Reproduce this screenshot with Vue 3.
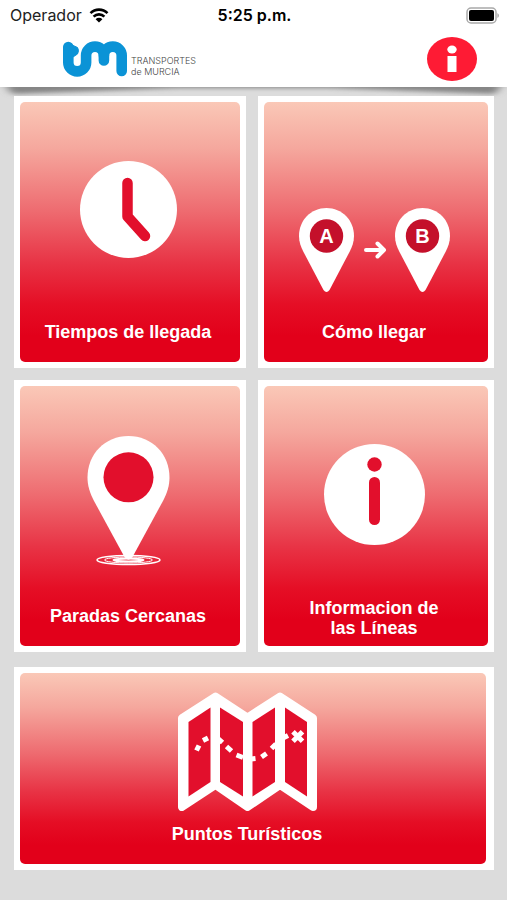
<template>
    <div class="home-page">
        <header class="top-header">
            <div class="status-bar">
                <div class="carrier">
                    <span>Operador</span>
                    <svg class="wifi-icon" viewBox="0 0 20 15">
                        <path d="M1.5 5.2a12 12 0 0 1 17 0" fill="none" stroke="#000" stroke-width="2.6" />
                        <path d="M4.6 8.6a7.6 7.6 0 0 1 10.8 0" fill="none" stroke="#000" stroke-width="2.6" />
                        <path d="M10 14.6L6.6 11.2a4.8 4.8 0 0 1 6.8 0z" />
                    </svg>
                </div>
                <strong class="clock">5:25 p.m.</strong>
                <svg class="battery-icon" viewBox="0 0 33 17">
                    <rect x="1" y="1" width="29" height="15" rx="4" fill="#fff" stroke="#a9a9a9" stroke-width="1.5" />
                    <rect x="3" y="3" width="25" height="11" rx="2" />
                    <path d="M31.4 6v5q1.6-1 1.6-2.5T31.4 6z" fill="#a9a9a9" />
                </svg>
            </div>

            <div class="brand-bar">
                <div class="brand">
                    <svg class="brand-mark" viewBox="0 0 66 36">
                        <g fill="none" stroke="#0b93d6" stroke-width="10.6" stroke-linecap="round">
                            <path d="M6.300 6V21.500a8.900 8.900 0 0 0 17.800 0V14.500a8.900 8.900 0 0 1 17.800 0V19.500" />
                            <path d="M41.900 14.500a8.900 8.900 0 0 1 17.800 0V30" />
                        </g>
                        <path d="M8 3L15.500 6.500q2 3 0 6.500L11 16H6z" fill="#0b93d6" stroke="#0b93d6"
                            stroke-linejoin="round" />
                    </svg>
                    <div class="brand-name">
                        <span>TRANSPORTES</span>
                        <span>de MURCIA</span>
                    </div>
                </div>
                <button class="info-btn" aria-label="Información">
                    <svg viewBox="0 0 50 44">
                        <ellipse cx="25" cy="22" rx="25" ry="22" fill="#fe1b34" />
                        <ellipse cx="25" cy="12.5" rx="4.7" ry="4" fill="#fff" />
                        <rect x="20.5" y="19" width="9" height="16" fill="#fff" />
                    </svg>
                </button>
            </div>

            <svg class="header-shadow" viewBox="0 0 507 12" preserveAspectRatio="none">
                <defs>
                    <filter id="soft" x="-5%" y="-50%" width="110%" height="200%">
                        <feGaussianBlur stdDeviation="5 2" />
                    </filter>
                </defs>
                <path d="M4-4H503L495 7L330 1H177L12 7z" fill="#858585" filter="url(#soft)" />
            </svg>
        </header>

        <main class="menu-grid">
            <button v-for="item in menuItems" :key="item.id" class="menu-card" :class="'card-' + item.id">
                <span class="card-face">
                    <!-- Reloj -->
                    <svg v-if="item.id === 'arrivals'" class="card-icon" width="97" height="97" viewBox="0 0 97 97">
                        <circle cx="48.5" cy="48.5" r="48.5" fill="#fff" />
                        <path d="M47.5 22V55.5L65 75" fill="none" stroke="#e20f2c" stroke-width="10.5"
                            stroke-linecap="round" stroke-linejoin="round" />
                    </svg>

                    <!-- Ruta de A a B -->
                    <svg v-if="item.id === 'route'" class="card-icon" width="151" height="84" viewBox="0 0 151 84">
                        <g v-for="pin in routePins" :key="pin.label" :transform="`translate(${pin.x} 0)`">
                            <path
                                d="M27.5 0C12 0 0 12 0 28C0 34 2 39 4 43L24.5 82q3 4 6 0L51 43c2-4 4-9 4-15C55 12 43 0 27.5 0z"
                                fill="#fff" />
                            <circle cx="27.5" cy="28" r="16.7" fill="#c4102b" />
                            <text x="27.5" y="35" class="pin-letter">{{ pin.label }}</text>
                        </g>
                        <path d="M67 42H85M78.5 35.5L85 42L78.5 48.5" fill="none" stroke="#fff" stroke-width="4"
                            stroke-linecap="round" stroke-linejoin="round" />
                    </svg>

                    <!-- Parada -->
                    <svg v-if="item.id === 'nearby'" class="card-icon" width="83" height="130" viewBox="0 0 83 130">
                        <g fill="none" stroke="#fff">
                            <ellipse cx="41.5" cy="124" rx="31.5" ry="4.5" stroke-width="1.5" />
                            <ellipse cx="41.5" cy="124" rx="24" ry="3" stroke-width="1" />
                            <ellipse cx="41.5" cy="124" rx="15" ry="1.5" stroke-width="2" />
                        </g>
                        <path
                            d="M41.5 0C18 0 .5 18 .5 41.5C.5 50 3 57 6.5 64L37.5 121q4 5.500 8 0L76.500 64c3.500-7 6-14 6-22.500C82.500 18 65 0 41.500 0z"
                            fill="#fff" />
                        <circle cx="41.5" cy="41.3" r="25" fill="#e20f2c" />
                    </svg>

                    <!-- Información -->
                    <svg v-if="item.id === 'lines'" class="card-icon" width="101" height="101" viewBox="0 0 101 101">
                        <circle cx="50.5" cy="50.5" r="50.5" fill="#fff" />
                        <circle cx="50.5" cy="20.5" r="7.2" fill="#e20f2c" />
                        <rect x="45" y="33" width="11" height="48" rx="5.5" fill="#e20f2c" />
                    </svg>

                    <!-- Mapa -->
                    <svg v-if="item.id === 'tourism'" class="card-icon" width="139" height="119" viewBox="0 0 139 119">
                        <path
                            d="M4 26L37.5 4.5L69.5 25.5L102 4.5L135 26V115L102 93L69.5 115L37.5 93L4 115z"
                            fill="#fff" stroke="#fff" stroke-width="8" stroke-linejoin="round" />
                        <g fill="#e20f2c">
                            <path d="M10.5 30L32.5 15.5V90L10.5 104.5z" />
                            <path d="M42 15.5L65 30V104.5L42 90z" />
                            <path d="M74.5 30L97 15.5V90L74.5 104.5z" />
                            <path d="M107 15.5L129 30V104.5L107 90z" />
                        </g>
                        <g fill="none" stroke="#fff" stroke-width="5">
                            <path
                                d="M18.5 58.5l2.5-5M25 48.5l5-2.5M40 46.5l4.5 4M48.5 54.5l5 4.5M58.5 63l6.5 2.5M73 67l4.5-.5M83.5 65l5-3.5M93.5 56.5l4.5-4.5M105 46l5-2.5" />
                            <path d="M115 39.7l9.5 9.5M124.5 39.7l-9.5 9.5" />
                        </g>
                    </svg>

                    <span class="card-label">{{ item.label }}</span>
                </span>
            </button>
        </main>
    </div>
</template>

<script setup>
// Opciones del menú principal
const menuItems = [
    { id: 'arrivals', label: 'Tiempos de llegada' },
    { id: 'route', label: 'Cómo llegar' },
    { id: 'nearby', label: 'Paradas Cercanas' },
    { id: 'lines', label: 'Informacion de\nlas Líneas' },
    { id: 'tourism', label: 'Puntos Turísticos' }
]

const routePins = [
    { label: 'A', x: 0 },
    { label: 'B', x: 96 }
]
</script>

<style>
body {
    background: #dcdcdc;
}
</style>

<style scoped>
.home-page {
    min-height: 100vh;
    background: #dcdcdc;
    font-family: "Liberation Sans", Arial, sans-serif;
}

button {
    border: none;
    padding: 0;
    font-family: inherit;
    cursor: pointer;
}

/* ================= CABECERA ================= */
.top-header {
    position: relative;
    background: #fff;
}

.status-bar {
    display: grid;
    grid-template-columns: 1fr auto 1fr;
    align-items: center;
    height: 30px;
    padding: 0 8px 0 10px;
    font-family: Inter, sans-serif;
    font-size: 16px;
    color: #000;
}

.carrier {
    display: flex;
    align-items: center;
    gap: 7px;
    color: #222;
}

.wifi-icon {
    width: 20px;
    height: 15px;
}

.clock {
    font-weight: 600;
}

.battery-icon {
    justify-self: end;
    width: 33px;
    height: 17px;
}

.brand-bar {
    display: flex;
    justify-content: space-between;
    align-items: center;
    height: 57px;
    padding: 0 30px 0 62px;
}

.brand {
    display: flex;
    align-items: flex-end;
    gap: 3px;
}

.brand-mark {
    width: 66px;
    height: 36px;
}

.brand-name {
    display: flex;
    flex-direction: column;
    font-family: Inter, sans-serif;
    font-weight: 300;
    font-size: 9px;
    line-height: 11px;
    color: #444;
}

.info-btn {
    width: 50px;
    height: 44px;
    background: none;
}

.info-btn svg {
    display: block;
}

.header-shadow {
    position: absolute;
    top: 100%;
    left: 0;
    width: 100%;
    height: 12px;
}

/* ================= MENÚ ================= */
.menu-grid {
    position: relative;
    display: grid;
    grid-template-columns: 58fr 59fr;
    gap: 12px;
    padding: 9px 13px 28px 14px;
}

.menu-card {
    display: flex;
    min-height: 272px;
    padding: 6px;
    background: #fff;
}

.card-face {
    flex: 1;
    align-self: stretch;
    display: flex;
    flex-direction: column;
    align-items: center;
    box-sizing: border-box;
    padding: 0 4px 20px 0;
    border-radius: 5px;
    background: linear-gradient(#fac8b7 0%, #f5a79d 18%, #ee6b70 42%, #e83345 62%, #e50e25 78%, #e2001a 90%);
}

.card-label {
    margin-top: auto;
    color: #fff;
    font-size: 18px;
    font-weight: 700;
    line-height: 20px;
    text-align: center;
    white-space: pre-line;
}

.pin-letter {
    fill: #fff;
    font-size: 20px;
    font-weight: 700;
    text-anchor: middle;
}

.card-arrivals .card-icon {
    margin-top: 59px;
}

.card-route .card-icon {
    margin-top: 106px;
}

.card-nearby .card-icon {
    margin-top: 50px;
}

.card-lines .card-icon {
    margin-top: 58px;
}

.card-lines .card-face {
    padding-bottom: 8px;
}

.card-tourism {
    grid-column: 1 / -1;
    min-height: 203px;
    margin-top: 3px;
    padding-right: 8px;
}

.card-tourism .card-face {
    padding-right: 12px;
}

.card-tourism .card-icon {
    margin-top: 19px;
}
</style>
